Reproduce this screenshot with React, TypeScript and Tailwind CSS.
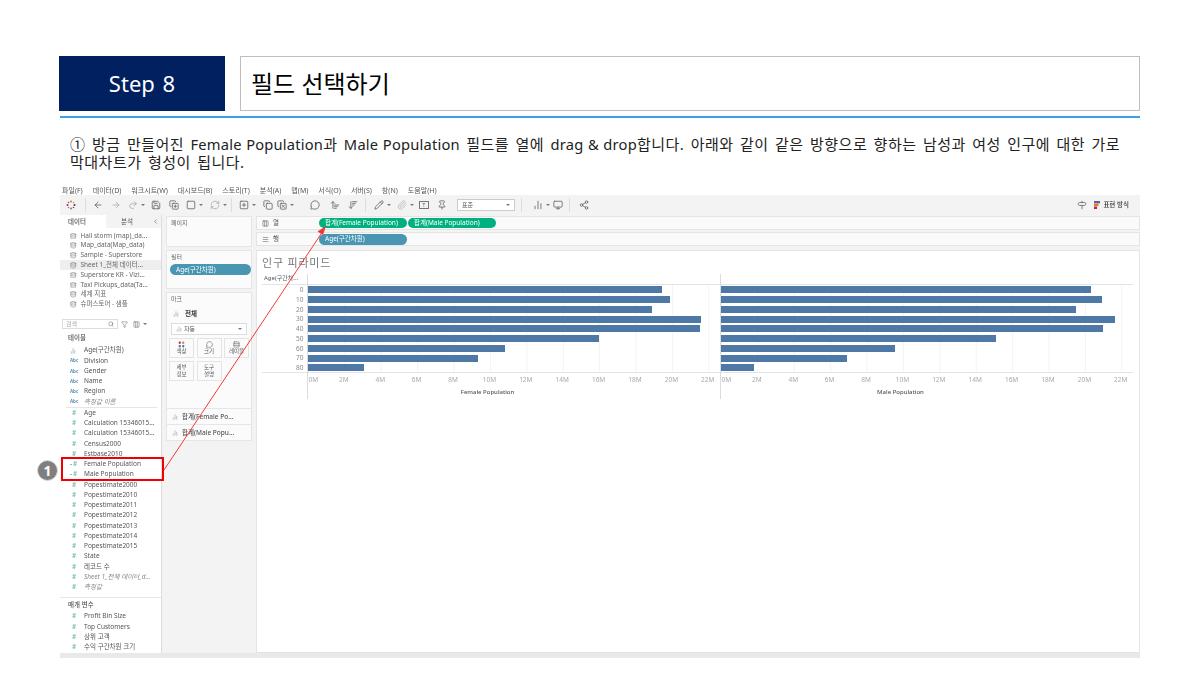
import {
  ArrowLeft,
  ArrowRight,
  BarChart2,
  ChevronLeft,
  Columns3,
  Database,
  Filter,
  Menu as MenuIcon,
  MessageCircle,
  Monitor,
  Paperclip,
  Pencil,
  Pin,
  Redo2,
  RefreshCw,
  Rows3,
  Save,
  Search,
  Share2,
  SquarePlus,
  Signpost,
  ArrowDownWideNarrow,
  ArrowUpWideNarrow,
  Square,
  CopyPlus,
  Copy,
  CopyX,
} from "lucide-react";

const kr = "font-['Noto_Sans','Noto_Sans_CJK_KR',sans-serif]";

const menus = [
  "파일(F)",
  "데이터(D)",
  "워크시트(W)",
  "대시보드(B)",
  "스토리(T)",
  "분석(A)",
  "맵(M)",
  "서식(O)",
  "서버(S)",
  "창(N)",
  "도움말(H)",
];

const sources = [
  "Hail storm (map)_da...",
  "Map_data(Map_data)",
  "Sample - Superstore",
  "Sheet 1_전체 데이터...",
  "Superstore KR - Vizi...",
  "Taxi Pickups_data(Ta...",
  "세계 지표",
  "슈퍼스토어 - 샘플",
];

const dimensions = ["Division", "Gender", "Name", "Region"];

const measures = [
  "Age",
  "Calculation 15346015...",
  "Calculation 15346015...",
  "Census2000",
  "Estbase2010",
  "Female Population",
  "Male Population",
  "Popestimate2000",
  "Popestimate2010",
  "Popestimate2011",
  "Popestimate2012",
  "Popestimate2013",
  "Popestimate2014",
  "Popestimate2015",
  "State",
  "레코드 수",
];

const params = ["Profit Bin Size", "Top Customers", "상위 고객", "수익 구간차원 크기"];

const ages = ["0", "10", "20", "30", "40", "50", "60", "70", "80"];
const femaleBars = [354, 362, 344, 393, 392, 291, 197, 170, 56];
const maleBars = [370, 381, 355, 394, 382, 275, 174, 126, 33];
const ticks = ["2M", "4M", "6M", "8M", "10M", "12M", "14M", "16M", "18M", "20M", "22M"];

function Caret() {
  return <span className="ml-[3px] h-0 w-0 border-x-[2px] border-t-[2px] border-x-transparent border-t-[#777]" />;
}

function Sep({ className }: { className: string }) {
  return <span className={`h-[14px] w-px bg-[#ddd] ${className}`} />;
}

function Toolbar() {
  const ic = "size-[10px] shrink-0 text-[#666]";
  return (
    <div className="flex h-[20px] items-center bg-[#f3f3f3]">
      <svg viewBox="0 0 10 10" className="ml-[6px] size-[10px] shrink-0">
        <circle cx="5" cy="1.5" r="1" fill="#e8762c" />
        <circle cx="5" cy="8.5" r="1" fill="#59879b" />
        <circle cx="1.5" cy="5" r="1" fill="#c72035" />
        <circle cx="8.5" cy="5" r="1" fill="#1f447e" />
        <circle cx="2.5" cy="2.5" r="0.8" fill="#5b6591" />
        <circle cx="7.5" cy="2.5" r="0.8" fill="#eb912b" />
        <circle cx="2.5" cy="7.5" r="0.8" fill="#7099a6" />
        <circle cx="7.5" cy="7.5" r="0.8" fill="#c72035" />
      </svg>
      <Sep className="ml-[9px]" />
      <ArrowLeft className={`${ic} ml-[7px]`} />
      <ArrowRight className={`${ic} ml-[8px] opacity-50`} />
      <Redo2 className={`${ic} ml-[7px] opacity-50`} />
      <Caret />
      <Save className={`${ic} ml-[6px]`} />
      <CopyPlus className={`${ic} ml-[8px]`} />
      <Square className={`${ic} ml-[7px]`} />
      <Caret />
      <RefreshCw className={`${ic} ml-[7px] opacity-50`} />
      <Caret />
      <Sep className="ml-[4px]" />
      <SquarePlus className={`${ic} ml-[7px]`} />
      <Caret />
      <Copy className={`${ic} ml-[7px]`} />
      <CopyX className={`${ic} ml-[4px]`} />
      <Caret />
      <MessageCircle className={`${ic} ml-[16px]`} />
      <ArrowUpWideNarrow className={`${ic} ml-[10px]`} />
      <ArrowDownWideNarrow className={`${ic} ml-[8px]`} />
      <Sep className="ml-[7px]" />
      <Pencil className={`${ic} ml-[8px]`} />
      <Caret />
      <Paperclip className={`${ic} ml-[6px] opacity-40`} />
      <Caret />
      <span className="ml-[5px] flex h-[8px] w-[10px] items-center justify-center border border-[#777] text-[5px] leading-none text-[#555]">
        T
      </span>
      <Pin className={`${ic} ml-[8px]`} />
      <div className="ml-[10px] flex h-[12px] w-[58px] items-center justify-between border border-[#ccc] bg-white px-[4px] text-[6px] text-[#555]">
        표준
        <Caret />
      </div>
      <Sep className="ml-[6px]" />
      <BarChart2 className={`${ic} ml-[11px]`} />
      <Caret />
      <Monitor className={`${ic} ml-[3px]`} />
      <Sep className="ml-[6px]" />
      <Share2 className={`${ic} ml-[9px]`} />
      <Signpost className={`${ic} ml-auto`} />
      <svg viewBox="0 0 6 8" className="ml-[7px] h-[8px] w-[6px]">
        <rect width="6" height="2.4" fill="#5b6591" />
        <rect y="2.8" width="4.5" height="2.4" fill="#e8762c" />
        <rect y="5.6" width="3" height="2.4" fill="#c72035" />
      </svg>
      <span className="ml-[3px] mr-[11px] text-[6.5px] font-medium text-[#333]">표현 방식</span>
    </div>
  );
}

function FieldIcon({ kind }: { kind: "abc" | "num" | "link" | "bin" }) {
  if (kind === "abc") {
    return <span className="w-[9px] text-[4.5px] font-bold text-[#5d8fb0]">Abc</span>;
  }
  if (kind === "bin") {
    return <BarChart2 className="mr-[3px] size-[6px] text-[#5d8fb0]" />;
  }
  return (
    <span
      className={`flex w-[9px] items-center text-[6.5px] font-bold leading-none text-[#7cc4ad] ${
        kind === "link" ? "" : "pl-[2px]"
      }`}
    >
      {kind === "link" && <span className="mr-px h-px w-[2px] bg-[#7cc4ad]" />}#
    </span>
  );
}

function Field({ label, kind, italic }: { label: string; kind: "abc" | "num" | "link" | "bin"; italic?: boolean }) {
  return (
    <div className="flex h-[10.25px] items-center pl-[10px]">
      <FieldIcon kind={kind} />
      <span className={`ml-[5px] whitespace-nowrap text-[6.5px] leading-none text-[#555] ${italic ? "italic text-[#888]" : ""}`}>
        {label}
      </span>
    </div>
  );
}

function DataPane() {
  return (
    <aside className="flex w-[102px] shrink-0 flex-col border-r border-[#dcdcdc] bg-white">
      <div className="flex h-[13px] items-center bg-[#f3f3f3] text-[6.5px] text-[#555]">
        <span className="flex h-full w-[46px] items-center bg-white pl-[8px] font-medium">데이터</span>
        <span className="ml-[15px]">분석</span>
        <ChevronLeft className="ml-auto mr-[2px] size-[7px]" />
      </div>
      <div className="mt-[3px] flex flex-col">
        {sources.map((s, i) => (
          <div
            key={i}
            className={`flex h-[9.8px] items-center pl-[10px] ${i === 3 ? "bg-[#eeeeee]" : ""}`}
          >
            <Database className="size-[6.5px] shrink-0 text-[#777]" />
            <span className="ml-[4px] whitespace-nowrap text-[6.5px] leading-none text-[#666]">{s}</span>
          </div>
        ))}
      </div>
      <div className="ml-[2px] mt-[10px] flex h-[10px] items-center">
        <div className="flex h-full w-[56px] items-center justify-between border border-[#ddd] px-[3px] text-[6px] text-[#aaa]">
          검색
          <Search className="size-[6px] text-[#666]" />
        </div>
        <Filter className="ml-[3px] size-[7px] text-[#777]" />
        <Columns3 className="ml-[5px] size-[7px] text-[#777]" />
        <Caret />
      </div>
      <div className="mt-[4px] h-[10px] pl-[8px] text-[6.5px] font-medium leading-[10px] text-[#555]">테이블</div>
      <div className="mt-[2px] flex flex-col">
        <Field label="Age(구간차원)" kind="bin" />
        {dimensions.map((d) => (
          <Field key={d} label={d} kind="abc" />
        ))}
        <Field label="측정값 이름" kind="abc" italic />
      </div>
      <div className="ml-[6px] mr-[4px] border-t border-[#e6e6e6]" />
      <div className="flex flex-col">
        {measures.map((m) => (
          <Field key={m} label={m} kind={m.endsWith(" Population") ? "link" : "num"} />
        ))}
        <Field label="Sheet 1_전체 데이터_d..." kind="num" italic />
        <Field label="측정값" kind="num" italic />
      </div>
      <div className="mt-[5px] border-t border-[#e6e6e6] pl-[8px] pt-px text-[6.5px] font-medium leading-[12px] text-[#555]">
        매개 변수
      </div>
      <div className="flex flex-col">
        {params.map((p) => (
          <Field key={p} label={p} kind="num" />
        ))}
      </div>
    </aside>
  );
}

function Card({ title, className, children }: { title: string; className: string; children?: React.ReactNode }) {
  return (
    <div className={`border border-[#e6e6e6] bg-[#fbfbfb] ${className}`}>
      <div className="pl-[4px] pt-[2px] text-[6px] leading-[8px] text-[#666]">{title}</div>
      {children}
    </div>
  );
}

function MarkButton({ label, icon }: { label: React.ReactNode; icon?: React.ReactNode }) {
  return (
    <div className="flex h-[20px] w-[25px] flex-col items-center justify-center border border-[#e4e4e4] text-center text-[5.5px] leading-[7px] text-[#555]">
      {icon}
      {label}
    </div>
  );
}

function MarkRow({ label }: { label: string }) {
  return (
    <div className="flex h-[16px] items-center border-t border-[#e6e6e6] pl-[5px] text-[6.5px] text-[#555]">
      <BarChart2 className="size-[6px] shrink-0 text-[#888]" />
      <span className="ml-[4px] whitespace-nowrap font-medium">{label}</span>
    </div>
  );
}

function CardsPane() {
  return (
    <div className="flex w-[94px] shrink-0 flex-col gap-[3px] pl-[4px] pt-px">
      <Card title="페이지" className="h-[31px] w-[86px]" />
      <Card title="필터" className="h-[39px] w-[86px]">
        <div className="ml-[3px] mt-[3px] flex h-[11px] w-[81px] items-center rounded-full bg-[#4996b2] pl-[6px] text-[6.5px] text-white">
          Age(구간차원)
        </div>
      </Card>
      <Card title="마크" className="h-[149px] w-[86px]">
        <div className="mt-[3px] flex h-[16px] items-center pl-[6px] text-[6.5px] font-bold text-[#333]">
          <BarChart2 className="size-[6px] text-[#888]" />
          <span className="ml-[6px]">전체</span>
        </div>
        <div className="mx-[4px] mt-px flex h-[12px] items-center justify-between border border-[#ddd] bg-white px-[4px] text-[6px] text-[#555]">
          <span className="flex items-center">
            <BarChart2 className="mr-[2px] size-[6px] text-[#888]" />
            자동
          </span>
          <Caret />
        </div>
        <div className="ml-[2px] mt-[3px] flex flex-wrap gap-x-[2.5px] gap-y-[3px]">
          <MarkButton
            label="색상"
            icon={
              <svg viewBox="0 0 8 8" className="size-[7px]">
                <circle cx="2" cy="2" r="1.3" fill="#c72035" />
                <circle cx="6" cy="2" r="1.3" fill="#e8762c" />
                <circle cx="2" cy="6" r="1.3" fill="#5b6591" />
                <circle cx="6" cy="6" r="1.3" fill="#2f7a9b" />
              </svg>
            }
          />
          <MarkButton label="크기" icon={<MessageCircle className="size-[7px] text-[#666]" />} />
          <MarkButton label="레이블" icon={<Rows3 className="size-[7px] text-[#666]" />} />
          <MarkButton
            label={
              <>
                세부
                <br />
                정보
              </>
            }
          />
          <MarkButton
            label={
              <>
                도구
                <br />
                설명
              </>
            }
          />
        </div>
        <div className="mt-[27px] flex flex-col">
          <MarkRow label="합계(Female Po..." />
          <MarkRow label="합계(Male Popu..." />
        </div>
      </Card>
    </div>
  );
}

function Shelf({ label, icon, children }: { label: string; icon: React.ReactNode; children: React.ReactNode }) {
  return (
    <div className="flex h-[14px] items-center border border-[#e4e4e4] bg-[#fafafa] text-[6.5px] text-[#555]">
      <div className="flex w-[62px] shrink-0 items-center pl-[5px]">
        {icon}
        <span className="ml-[4px]">{label}</span>
      </div>
      {children}
    </div>
  );
}

function Pill({ label, className }: { label: string; className: string }) {
  return (
    <div className={`flex w-[88px] items-center rounded-full pl-[6px] text-[6.5px] leading-none text-white ${className}`}>
      {label}
    </div>
  );
}

function BarPanel({ bars, title, className }: { bars: number[]; title: string; className: string }) {
  return (
    <div className={`flex flex-col border-l border-[#dcdcdc] ${className}`}>
      <div className="h-[11px] border-b border-[#e4e4e4]" />
      <div className="flex h-[88px] flex-col border-b border-[#e4e4e4] bg-[linear-gradient(to_right,#f3f3f3_1px,transparent_1px)] bg-[length:36.4px_100%]">
        {bars.map((w, i) => (
          <div key={i} className="flex h-[9.75px] shrink-0 items-center">
            <div className="h-[7px] bg-[#4e79a7]" style={{ width: w }} />
          </div>
        ))}
      </div>
      <div className="flex h-[14px] items-center text-[6.5px] text-[#aaa]">
        <span className="w-[18.2px] shrink-0 pl-px">0M</span>
        {ticks.map((t) => (
          <span key={t} className="w-[36.4px] shrink-0 text-center">
            {t}
          </span>
        ))}
      </div>
      <div className="h-[12px] w-[360px] text-center text-[6px] font-medium leading-[10px] text-[#555]">{title}</div>
    </div>
  );
}

function Chart() {
  return (
    <div className="flex-1 border border-[#e4e4e4] bg-white pl-[5px]">
      <div className="h-[23px] pt-[5px] text-[11px] leading-[14px] tracking-[0.8px] text-[#777]">인구 피라미드</div>
      <div className="flex">
        <div className="flex w-[44.5px] shrink-0 flex-col">
          <div className="h-[11px] border-b border-[#e4e4e4] pl-[2px] text-[6px] leading-[9px] text-[#555]">
            Age(구간차...
          </div>
          <div className="flex h-[88px] flex-col border-b border-[#e4e4e4]">
            {ages.map((a) => (
              <div key={a} className="h-[9.75px] shrink-0 pr-[3px] text-right text-[6.5px] leading-[9.75px] text-[#888]">
                {a}
              </div>
            ))}
          </div>
        </div>
        <BarPanel bars={femaleBars} title="Female Population" className="w-[413px]" />
        <BarPanel bars={maleBars} title="Male Population" className="w-[413px]" />
      </div>
    </div>
  );
}

function Workbook() {
  return (
    <div className={`flex h-[473px] flex-col bg-[#f3f3f3] blur-[0.35px] ${kr}`}>
      <div className="flex h-[10px] items-center gap-[10px] bg-white pl-[2px] text-[7px] leading-none text-[#555]">
        {menus.map((m) => (
          <span key={m}>{m}</span>
        ))}
      </div>
      <Toolbar />
      <div className="flex min-h-0 flex-1 border-b-[5px] border-[#e9e9e9]">
        <DataPane />
        <CardsPane />
        <div className="flex min-w-0 flex-1 flex-col gap-[2px] pt-px">
          <Shelf label="열" icon={<Columns3 className="size-[7px] text-[#666]" />}>
            <div className="flex h-[10px] gap-px">
              <Pill label="합계(Female Population)" className="bg-[#00b180]" />
              <Pill label="합계(Male Population)" className="bg-[#00b180]" />
            </div>
          </Shelf>
          <Shelf label="행" icon={<MenuIcon className="size-[7px] text-[#666]" />}>
            <Pill label="Age(구간차원)" className="h-[11px] bg-[#4996b2]" />
          </Shelf>
          <div className="mt-[2px] flex min-h-0 flex-1">
            <Chart />
          </div>
        </div>
      </div>
    </div>
  );
}

function Latin({ children }: { children: React.ReactNode }) {
  return <span className="text-[14.7px] tracking-[0.2px] [word-spacing:0.5px]">{children}</span>;
}

export default function App() {
  return (
    <div className={`h-[675px] w-[1200px] overflow-hidden bg-white ${kr}`}>
      <header className="ml-[59px] flex h-[55px] gap-[15px] [margin-top:56px]">
        <div className="flex w-[166px] items-center justify-center bg-[#002060] text-[22px] text-white [word-spacing:2px]">
          Step 8
        </div>
        <div className="flex w-[900px] items-center border border-[#bdbdbd] pl-[10px] text-[24px] text-black">
          필드 선택하기
        </div>
      </header>
      <div className="ml-[60px] mt-[5px] h-[2px] w-[1080px] bg-[#3ba0ea]" />
      <p className="ml-[70px] mt-[17px] h-[36px] whitespace-nowrap text-[15px] leading-[18px] tracking-[0.5px] text-[#222] [word-spacing:2px]">
        ① 방금 만들어진 <Latin>Female Population</Latin>과 <Latin>Male Population</Latin> 필드를 열에{" "}
        <Latin>drag &amp; drop</Latin>합니다. 아래와 같이 같은 방향으로 향하는 남성과 여성 인구에 대한 가로
        <br />
        막대차트가 형성이 됩니다.
      </p>
      <div className="relative ml-[60px] mt-[14px] w-[1080px]">
        <Workbook />
        <div className="absolute left-[1px] top-[272px] h-[24px] w-[103px] border-2 border-[#f00000]" />
        <div className="absolute left-[-23px] top-[275px] flex size-[21px] items-center justify-center rounded-full border border-[#ddd] bg-[#7f7f7f] text-[14px] font-bold text-white">
          1
        </div>
        <svg className="pointer-events-none absolute left-0 top-0 h-[473px] w-[1080px]" viewBox="0 0 1080 473">
          <line x1="104" y1="285" x2="263" y2="46" stroke="#f03a3a" strokeWidth="1" />
          <polygon points="266,41 257.5,46.5 263,50" fill="#f03a3a" />
        </svg>
      </div>
    </div>
  );
}
